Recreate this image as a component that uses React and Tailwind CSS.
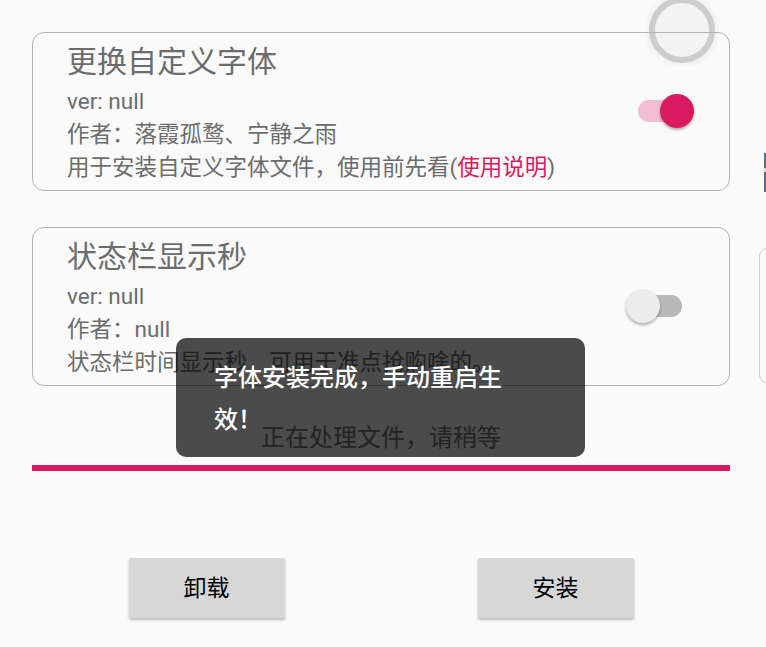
import React from 'react';

const Toggle = ({ on }) => (
  <div className="relative mb-[5px] h-[34px] w-[68px] shrink-0">
    <div className={`absolute left-[12px] right-[12px] top-[6px] h-[22px] rounded-full ${on ? 'bg-[#f1bdd0]' : 'bg-[#b9b9b9]'}`} />
    <div
      className={`absolute top-0 h-[34px] w-[34px] rounded-full shadow-[0_2px_3px_rgba(0,0,0,0.3)] ${on ? 'right-0 bg-[#d81b60]' : 'left-0 bg-[#ececec]'}`}
    />
  </div>
);

const ModuleCard = ({ title, author, desc, on, className = '' }) => (
  <div className={`relative z-10 flex items-center justify-between rounded-[12px] border border-[#b3b3b3] pb-[6px] pl-[34px] pr-[35px] pt-[10px] ${className}`}>
    <div className="min-w-0 whitespace-nowrap text-[#6c6c6c]">
      <div className="text-[30px] leading-[38px]">{title}</div>
      <div className="mt-[4px] text-[22.5px] leading-[33px]">ver: null</div>
      <div className="text-[22.5px] leading-[33px]">作者：{author}</div>
      <div className="text-[22.5px] leading-[33px]">{desc}</div>
    </div>
    <Toggle on={on} />
  </div>
);

export default function App() {
  return (
    <div className="relative h-[647px] w-[766px] overflow-hidden bg-[#fafafa] font-['Roboto','Noto_Sans_CJK_SC',sans-serif]">
      {/* pull-to-refresh spinner */}
      <div className="absolute left-[649px] top-[-3px] h-[66px] w-[66px] rounded-full border-[6px] border-[#cdcdcd] bg-[#f3f3f3] shadow-[0_0_3px_4px_rgba(0,0,0,0.03)]" />

      {/* neighbouring page edge */}
      <div className="absolute left-[764px] top-[153px] flex w-[2px] flex-col">
        <div className="h-[15px] bg-[#4a7090]" />
        <div className="h-[4px] bg-[#e8d2c0]" />
        <div className="h-[20px] bg-[#4a7090]" />
      </div>
      <div className="absolute left-[759px] top-[248px] h-[135px] w-[20px] rounded-[8px] border border-[#cfcfcf]" />

      <div className="pl-[32px] pr-[36px] pt-[32px]">
        <ModuleCard
          title="更换自定义字体"
          author="落霞孤鹜、宁静之雨"
          on
          desc={
            <>
              用于安装自定义字体文件，使用前先看(<span className="text-[#d81b60]">使用说明</span>)
            </>
          }
        />
        <ModuleCard
          className="mt-[36px]"
          title="状态栏显示秒"
          author="null"
          on={false}
          desc="状态栏时间显示秒，可用于准点抢购啥的。"
        />

        <div className="mt-[36px] text-center text-[24px] leading-[32px] text-[#757575]">正在处理文件，请稍等</div>
        <div className="mt-[11px] h-[6px] bg-[#d81b60]" />

        <div className="mt-[87px] grid grid-cols-2">
          <div className="flex justify-center">
            <button className="h-[60px] w-[156px] rounded-[2px] bg-[#d6d7d6] pt-[2px] text-[23px] text-black shadow-[0_2px_3px_rgba(0,0,0,0.25)]">卸载</button>
          </div>
          <div className="flex justify-center">
            <button className="h-[60px] w-[156px] rounded-[2px] bg-[#d6d7d6] pt-[2px] text-[23px] text-black shadow-[0_2px_3px_rgba(0,0,0,0.25)]">安装</button>
          </div>
        </div>
      </div>

      {/* toast */}
      <div className="absolute left-[176px] top-[338px] z-20 h-[119px] w-[409px] rounded-[10px] bg-[rgba(0,0,0,0.7)] pl-[38px] pt-[19px]">
        <div className="w-[300px] text-[24px] font-medium leading-[42px] text-white">字体安装完成，手动重启生效！</div>
      </div>
    </div>
  );
}
